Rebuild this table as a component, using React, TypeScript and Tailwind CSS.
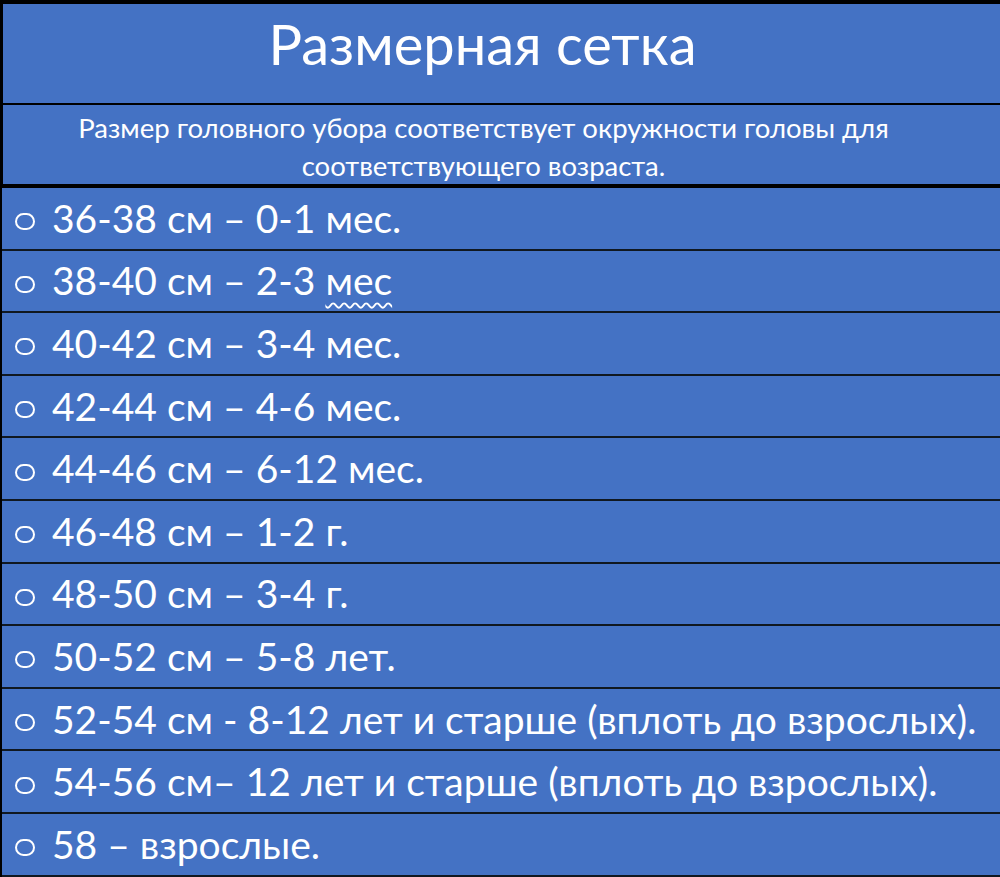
const rows: { text: string; squiggle?: string }[] = [
  { text: '36-38 см – 0-1 мес.' },
  { text: '38-40 см – 2-3 ', squiggle: 'мес' },
  { text: '40-42 см – 3-4 мес.' },
  { text: '42-44 см – 4-6 мес.' },
  { text: '44-46 см – 6-12 мес.' },
  { text: '46-48 см – 1-2 г.' },
  { text: '48-50 см – 3-4 г.' },
  { text: '50-52 см – 5-8 лет.' },
  { text: '52-54 см - 8-12 лет и старше (вплоть до взрослых).' },
  { text: '54-56 см– 12 лет и старше (вплоть до взрослых).' },
  { text: '58 – взрослые.' },
];

const App = () => {
  return (
    <div
      className="w-[1000px] h-[877px] overflow-hidden bg-black pt-[4px] text-white"
      style={{ fontFamily: 'Lato, "Noto Sans", sans-serif' }}
    >
      {/* Title */}
      <div className="ml-[3px] h-[99px] bg-[#4472c4] flex items-center justify-center pr-[38px] pb-[20px] text-[56px] leading-none">
        Размерная сетка
      </div>
      <div className="h-[2px]" />

      {/* Subtitle */}
      <div className="ml-[3px] h-[79px] bg-[#4472c4] flex flex-col items-center pr-[36px] pt-[4px] text-[27.5px] leading-[38px]">
        <span>Размер головного убора соответствует окружности головы для</span>
        <span>соответствующего возраста.</span>
      </div>
      <div className="h-[4px]" />

      {/* Size rows */}
      <div className="ml-[2px]">
        {rows.map((row, i) => (
          <div
            key={i}
            className="h-[62.6px] bg-[#4472c4] border-b-2 border-[#101820] flex items-center pl-[13px]"
          >
            <span className="w-[20px] h-[17px] rounded-full border-2 border-white shrink-0 mt-[7px]" />
            <span className="ml-[17px] text-[39px] leading-none whitespace-nowrap">
              {row.text}
              {row.squiggle && (
                <span className="underline decoration-wavy decoration-white decoration-[1.5px] underline-offset-[7px]">
                  {row.squiggle}
                </span>
              )}
            </span>
          </div>
        ))}
      </div>
    </div>
  );
};

export default App;
